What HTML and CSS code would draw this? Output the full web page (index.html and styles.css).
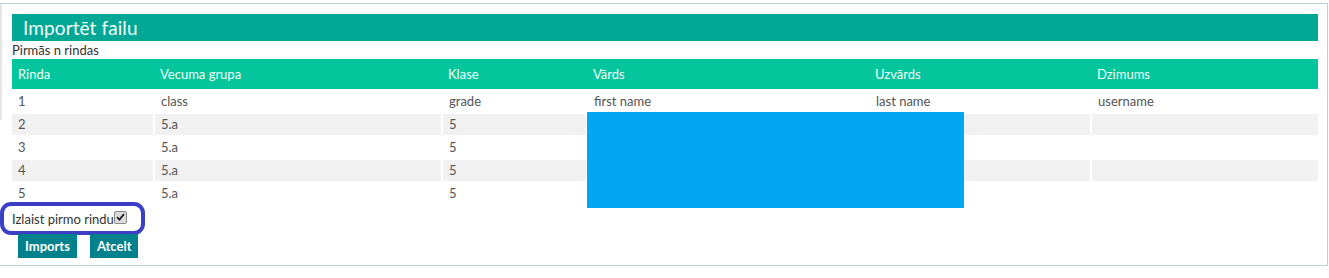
FILE: index.html
```html
<!DOCTYPE html>
<html lang="lv">
<head>
  <meta charset="UTF-8" />
  <meta name="viewport" content="width=device-width, initial-scale=1.0"/>
  <title>Importēt failu</title>
  <link rel="stylesheet" href="styles.css">
</head>
<body>
  <div class="panel">
    <h2 class="panel-title">Importēt failu</h2>
    <div class="caption">Pirmās n rindas</div>

    <table class="preview">
      <colgroup>
        <col class="c1"><col class="c2"><col class="c3"><col class="c4"><col class="c5"><col class="c6">
      </colgroup>
      <thead>
        <tr>
          <th>Rinda</th>
          <th>Vecuma grupa</th>
          <th>Klase</th>
          <th>Vārds</th>
          <th>Uzvārds</th>
          <th>Dzimums</th>
        </tr>
      </thead>
      <tbody>
        <tr><td>1</td><td>class</td><td>grade</td><td>first name</td><td>last name</td><td>username</td></tr>
        <tr><td>2</td><td>5.a</td><td>5</td><td></td><td></td><td></td></tr>
        <tr><td>3</td><td>5.a</td><td>5</td><td></td><td></td><td></td></tr>
        <tr><td>4</td><td>5.a</td><td>5</td><td></td><td></td><td></td></tr>
        <tr><td>5</td><td>5.a</td><td>5</td><td></td><td></td><td></td></tr>
      </tbody>
    </table>

    <!-- redacted names -->
    <div class="redact"></div>

    <label class="skip-row">
      Izlaist pirmo rindu<span class="check">
        <svg width="9" height="8" viewBox="0 0 9 8"><path d="M1 4.2 L3.4 6.6 L8 1.2" fill="none" stroke="#222" stroke-width="1.8"/></svg>
      </span>
    </label>

    <div class="actions">
      <button class="btn">Imports</button>
      <button class="btn">Atcelt</button>
    </div>
  </div>
</body>
</html>
```

FILE: styles.css
```css
body {
  margin: 0;
  font-family: Lato, "Open Sans", sans-serif;
  font-size: 13px;
  color: #555;
  background: #fff;
}

.panel {
  position: relative;
  box-sizing: border-box;
  width: 1328px;
  margin-top: 3px;
  padding: 10px 9px 7px 12px;
  border: 1px solid #b7d0db;
  border-left: none;
}

.panel::before {
  content: "";
  position: absolute;
  left: 0;
  top: 0;
  width: 2px;
  height: 116px;
  background: #e6e6e6;
}

.panel-title {
  margin: 0;
  height: 27px;
  line-height: 28px;
  padding-left: 11px;
  background: #00a895;
  color: #f4fffc;
  font-size: 19px;
  font-weight: normal;
  letter-spacing: 0.1px;
}

.caption {
  height: 18px;
  line-height: 18px;
  color: #333;
}

.preview {
  width: 100%;
  table-layout: fixed;
  border-collapse: collapse;
}

.c1 { width: 142px; }
.c2 { width: 288px; }
.c3 { width: 145px; }
.c4 { width: 282px; }
.c5 { width: 222px; }

.preview th {
  height: 30px;
  padding: 0 6px;
  background: #04c59b;
  color: #effffa;
  font-weight: normal;
  text-align: left;
}

.preview td {
  height: 21px;
  padding: 0 6px;
  border-top: 2px solid #fff;
  border-left: 2px solid #fff;
  line-height: 21px;
}

.preview td:first-child {
  border-left: none;
}

.preview tbody tr:nth-child(even) td {
  background: #f1f1f1;
}

.redact {
  position: absolute;
  left: 587px;
  top: 108px;
  width: 377px;
  height: 96px;
  background: #00a6ef;
}

.skip-row {
  display: inline-flex;
  align-items: center;
  margin: -2px 0 0 -12px;
  height: 25px;
  padding: 0 14px 0 8px;
  border: 4px solid #3b3fc6;
  border-radius: 11px;
  color: #333;
}

.check {
  display: inline-flex;
  align-items: center;
  justify-content: center;
  width: 11px;
  height: 11px;
  margin-bottom: 3px;
  border: 1px solid #8a8a8a;
  border-radius: 2px;
  background: #dcdcdc;
}

.actions {
  display: flex;
  gap: 13px;
  margin-top: -1px;
  padding-left: 6px;
}

.btn {
  height: 24px;
  padding: 0 7px;
  border: none;
  background: #00818c;
  color: #fff;
  font-family: Lato, "Open Sans", sans-serif;
  font-size: 13px;
  font-weight: bold;
}
```
